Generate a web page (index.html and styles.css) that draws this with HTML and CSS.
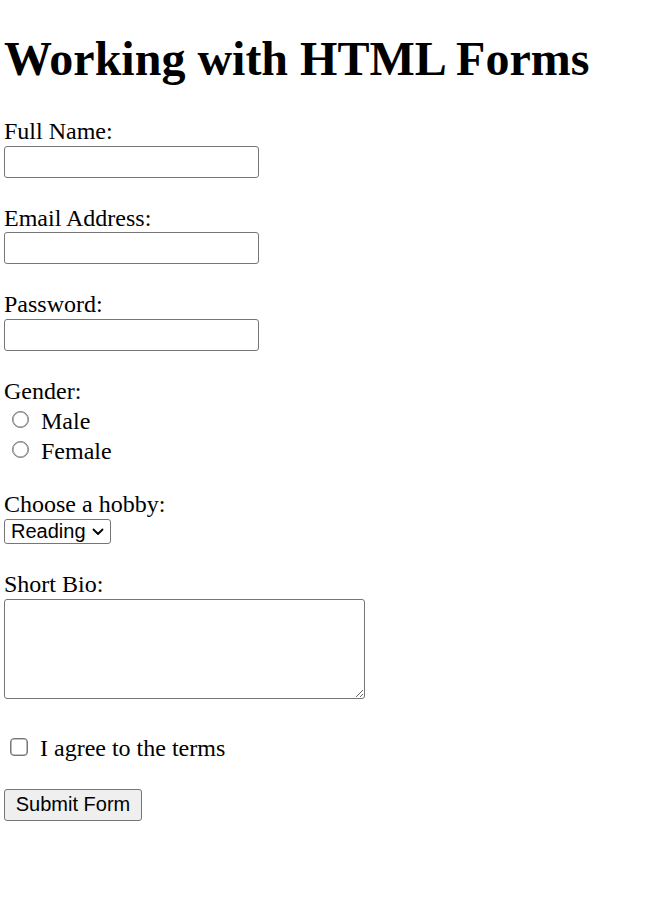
FILE: index.html
```html
<!DOCTYPE html>
<html lang="en">
<head>
<meta charset="utf-8">
<title>Working with HTML Forms</title>
<link rel="stylesheet" href="styles.css">
</head>
<body>
<h1 class="title">Working with HTML Forms</h1>
<form class="form">
  <div class="field">
    <label class="label" for="name">Full Name:</label>
    <input class="text-input" type="text" id="name">
  </div>
  <div class="field">
    <label class="label" for="email">Email Address:</label>
    <input class="text-input" type="email" id="email">
  </div>
  <div class="field">
    <label class="label" for="pw">Password:</label>
    <input class="text-input" type="password" id="pw">
  </div>
  <div class="field field-gender">
    <span class="label">Gender:</span>
    <label class="choice"><input class="radio" type="radio" name="g"><span class="choice-text">Male</span></label>
    <label class="choice"><input class="radio" type="radio" name="g"><span class="choice-text">Female</span></label>
  </div>
  <div class="field">
    <label class="label" for="hobby">Choose a hobby:</label>
    <div class="select-wrap">
      <select class="select" id="hobby">
        <option>Reading</option>
        <option>Sports</option>
        <option>Music</option>
      </select>
      <svg class="chevron" width="12" height="8" viewBox="0 0 12 8"><path d="M1.5 1.5 L6 6 L10.5 1.5" fill="none" stroke="#000" stroke-width="1.8" stroke-linecap="round" stroke-linejoin="round"/></svg>
    </div>
  </div>
  <div class="field field-bio">
    <label class="label" for="bio">Short Bio:</label>
    <textarea class="textarea" id="bio"></textarea>
  </div>
  <div class="field">
    <label class="choice"><input class="checkbox" type="checkbox"><span class="choice-text">I agree to the terms</span></label>
  </div>
  <button class="button" type="submit">Submit Form</button>
</form>
</body>
</html>
```
FILE: styles.css
```css
html { background: #fff; }
body {
  margin: 0;
  padding: 0 4px;
  font-family: "Liberation Serif", "Times New Roman", serif;
  font-size: 24px;
  color: #000;
}
.title {
  font-size: 48px;
  font-weight: bold;
  line-height: 55px;
  margin: 31px 0 32px;
}
.form { margin: 0; }
.field {
  display: flex;
  flex-direction: column;
  align-items: flex-start;
  margin-bottom: 27px;
}
.field-gender { margin-bottom: 26px; }
.label {
  display: block;
  line-height: 27.6px;
}
.text-input {
  box-sizing: border-box;
  width: 255px;
  height: 32px;
  margin: 0;
  padding: 0 3px;
  border: 1px solid #767676;
  border-radius: 3px;
  font: 20px "Liberation Sans", Arial, sans-serif;
  background: #fff;
}
.choice {
  display: flex;
  align-items: flex-start;
  height: 30px;
}
.radio, .checkbox {
  appearance: none;
  -webkit-appearance: none;
  box-sizing: border-box;
  border: 1px solid #767676;
  box-shadow: inset 0 0 0 0.6px #8a8a8a;
  background: #fff;
}
.radio {
  width: 17px;
  height: 17px;
  margin: 6px 12px 0 8px;
  border-radius: 50%;
}
.checkbox {
  width: 18px;
  height: 18px;
  margin: 6px 12px 0 6px;
  border-radius: 4px;
}
.choice-text {
  display: block;
  line-height: 30px;
  padding-top: 1px;
}
.select-wrap {
  position: relative;
  display: flex;
}
.select {
  appearance: none;
  -webkit-appearance: none;
  display: block;
  box-sizing: border-box;
  width: 107px;
  height: 25px;
  margin: 0;
  padding: 0 0 0 6px;
  border: 1px solid #767676;
  border-radius: 3px;
  background: #fff;
  color: #000;
  font: 20px "Liberation Sans", Arial, sans-serif;
  line-height: 23px;
}
.chevron {
  position: absolute;
  right: 7px;
  top: 9px;
  pointer-events: none;
}
.textarea {
  display: block;
  box-sizing: border-box;
  width: 361px;
  height: 100px;
  margin: 0;
  padding: 3px;
  border: 1px solid #767676;
  border-radius: 3px;
  font: 20px "Liberation Mono", monospace;
  resize: both;
}
.field-bio { margin-bottom: 33px; }
.button {
  box-sizing: border-box;
  width: 138px;
  height: 32px;
  margin: 0;
  padding: 0;
  border: 1px solid #767676;
  border-radius: 3px;
  background: #efefef;
  color: #000;
  font: 20px "Liberation Sans", Arial, sans-serif;
}
```
